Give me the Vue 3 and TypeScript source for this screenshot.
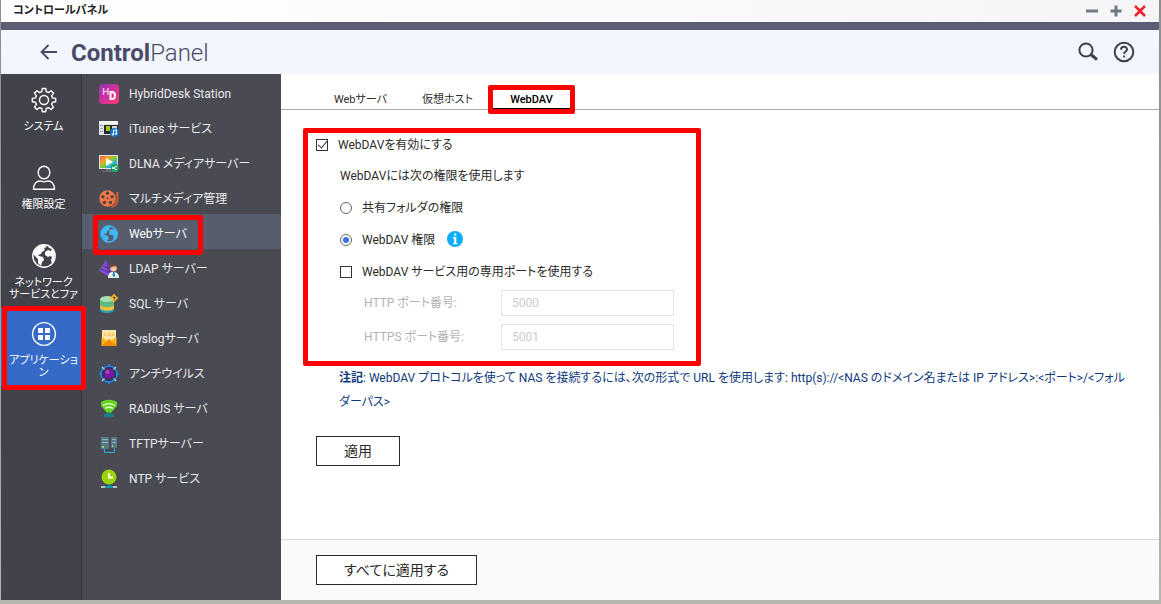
<script setup lang="ts">
import { ref } from 'vue'

interface Category {
  id: string
  lines: string[]
}
interface Service {
  id: string
  label: string
}

const categories: Category[] = [
  { id: 'system', lines: ['システム'] },
  { id: 'privilege', lines: ['権限設定'] },
  { id: 'network', lines: ['ネットワーク', 'サービスとファ'] },
  { id: 'apps', lines: ['アプリケーショ', 'ン'] },
]

const services: Service[] = [
  { id: 'hybrid', label: 'HybridDesk Station' },
  { id: 'itunes', label: 'iTunes サービス' },
  { id: 'dlna', label: 'DLNA メディアサーバー' },
  { id: 'multimedia', label: 'マルチメディア管理' },
  { id: 'web', label: 'Webサーバ' },
  { id: 'ldap', label: 'LDAP サーバー' },
  { id: 'sql', label: 'SQL サーバ' },
  { id: 'syslog', label: 'Syslogサーバ' },
  { id: 'antivirus', label: 'アンチウイルス' },
  { id: 'radius', label: 'RADIUS サーバ' },
  { id: 'tftp', label: 'TFTPサーバー' },
  { id: 'ntp', label: 'NTP サービス' },
]

const tabs = ['Webサーバ', '仮想ホスト', 'WebDAV']

const category = ref('apps')
const service = ref('web')
const tab = ref('WebDAV')
const enabled = ref(true)
const permission = ref('webdav')
const dedicatedPort = ref(false)
const httpPort = ref('5000')
const httpsPort = ref('5001')
</script>

<template>
  <div class="desktop">
    <div class="window">
      <header class="titlebar">
        <span class="title">コントロールパネル</span>
        <div class="controls">
          <button type="button" aria-label="最小化">
            <svg width="12" height="12" viewBox="0 0 12 12"><path d="M0 6h12" stroke="#6f7a82" stroke-width="3" /></svg>
          </button>
          <button type="button" aria-label="最大化">
            <svg width="12" height="12" viewBox="0 0 12 12"><path d="M0.500 6h11M6 .5v11" stroke="#6f7a82" stroke-width="3" /></svg>
          </button>
          <button type="button" aria-label="閉じる">
            <svg width="12" height="12" viewBox="0 0 12 12"><path d="M1 1l10 10M11 1L1 11" stroke="#ee2227" stroke-width="2.500" /></svg>
          </button>
        </div>
      </header>

      <div class="brandbar">
        <button type="button" class="back" aria-label="戻る">
          <svg width="18" height="18" viewBox="0 0 18 18" fill="none" stroke="#4b4a66" stroke-width="1.800"><path d="M17 9H2M8.500 2L1.500 9l7 7" /></svg>
        </button>
        <h1><b>Control</b>Panel</h1>
        <div class="tools">
          <button type="button" aria-label="検索">
            <svg width="20" height="20" viewBox="0 0 20 20" fill="none" stroke="#3f3f4a"><circle cx="8" cy="8" r="6.600" stroke-width="2" /><path d="M12.500 12.500l1.500 1" stroke-width="2" /><path d="M13.500 13l5.500 4.600" stroke-width="3" /></svg>
          </button>
          <button type="button" aria-label="ヘルプ">
            <svg width="22" height="22" viewBox="0 0 22 22" fill="none" stroke="#3f3f4a" stroke-width="2"><circle cx="11" cy="11" r="9.300" /><path d="M8 8.800c0-4 6-3.800 6-.4 0 2.200-2.900 2.200-2.900 4.600M11.100 14.600v2" /></svg>
          </button>
        </div>
      </div>

      <div class="body">
        <nav class="categories" aria-label="カテゴリ">
          <button
            v-for="c in categories"
            :key="c.id"
            type="button"
            class="category"
            :class="{ active: category === c.id }"
            @click="category = c.id"
          >
            <svg width="26" height="26" viewBox="0 0 26 26" fill="none" stroke="#fff" stroke-width="1.400">
              <template v-if="c.id === 'system'">
                <circle cx="13" cy="13" r="4.500" />
                <path stroke-linejoin="round" d="M11.300 1.500h3.400l.6 3.200 2.100.9 2.700-1.900 2.400 2.400-1.900 2.700.9 2.100 3.200.6v3.300l-3.200.5-.9 2.100 1.900 2.700-2.400 2.400-2.700-1.800-2.100.8-.6 3.200h-3.400l-.5-3.200-2.200-.8-2.700 1.800-2.400-2.400 1.900-2.700-.9-2.100-3.200-.5v-3.300l3.200-.6.9-2.100-1.900-2.700 2.400-2.400 2.700 1.900 2.200-.9z" />
              </template>
              <template v-else-if="c.id === 'privilege'">
                <ellipse cx="13" cy="7.500" rx="5.800" ry="6.300" />
                <path d="M2.500 24.300c0-5.300 3-8.300 6.500-8.300 2 0 2 .8 4 .8s2-.8 4-.8c3.500 0 6.500 3 6.500 8.300z" stroke-linejoin="round" />
              </template>
              <template v-else-if="c.id === 'network'">
                <circle cx="13" cy="13" r="11.200" />
                <path fill="#fff" stroke="none" d="M3 8l5-5 5-1 3 2-3 1 1 2-3 2-1 2-3 1 1 1 4 1 1 3-2 2-1 4-3-3 0-4-4-4zM17 3l4 2 3 5-1 7-2 4-1-4 1-3-2-1-2 1-3-2 0-3 3-2 3 1 1-2-3-1z" />
              </template>
              <template v-else>
                <circle cx="13" cy="13" r="11.400" />
                <path fill="#fff" stroke="none" d="M7 7h5v5H7zM14 7h5v5h-5zM7 14h5v5H7zM14 14h5v5h-5z" />
              </template>
            </svg>
            <span class="caption"><span v-for="l in c.lines" :key="l">{{ l }}</span></span>
          </button>
        </nav>

        <nav class="services" aria-label="アプリケーション">
          <button
            v-for="s in services"
            :key="s.id"
            type="button"
            class="service"
            :class="{ active: service === s.id }"
            @click="service = s.id"
          >
            <svg width="20" height="20" viewBox="0 0 20 20">
              <template v-if="s.id === 'hybrid'">
                <defs><linearGradient id="hd" x1="0" y1="0" x2="1" y2="1"><stop offset="0" stop-color="#8c36b9" /><stop offset=".5" stop-color="#d32f9d" /><stop offset="1" stop-color="#ff3b67" /></linearGradient></defs>
                <rect width="20" height="20" rx="4" fill="url(#hd)" />
                <path d="M4.500 4v7M9 4v7M4.500 7.500H9" stroke="#f2b7de" stroke-width="1.500" fill="none" />
                <path d="M11.500 8v7h1.500c4 0 4-7 0-7z" stroke="#fff" stroke-width="2" fill="none" />
              </template>
              <template v-else-if="s.id === 'itunes'">
                <path fill="#dfe3e5" d="M0 2h19v14H0z" /><path fill="#f5f5f5" d="M0 2h19v3H0z" />
                <path fill="#272b2d" d="M5 6h14v9H5z" /><path fill="#a8c820" d="M7 7h4v5H7z" /><path fill="#d8d8d8" d="M13 7h5v5h-5z" />
                <path stroke="#9da6ac" d="M1 6.500h3M1 9.500h3M1 12.500h3" />
                <circle cx="15.500" cy="13.500" r="4.500" fill="#1778d2" /><path d="M14.500 15.500v-4l3-.7v4" stroke="#fff" fill="none" /><circle cx="14" cy="15.500" r="1" fill="#fff" /><circle cx="17" cy="14.800" r="1" fill="#fff" />
              </template>
              <template v-else-if="s.id === 'dlna'">
                <defs><linearGradient id="tv" x1="0" y1="0" x2="1" y2="1"><stop offset="0" stop-color="#f55c58" /><stop offset=".28" stop-color="#ff9d25" /><stop offset=".52" stop-color="#7bd233" /><stop offset=".75" stop-color="#25a7f3" /><stop offset="1" stop-color="#884de2" /></linearGradient></defs>
                <path fill="#dce1e5" d="M0 1h19v14H0z" /><path fill="url(#tv)" d="M1 2h17v12H1z" /><path fill="#fff" d="M7 4l7 4-7 4z" /><path fill="#68747b" d="M7 15h5v2h3v1H4v-1h3z" />
                <circle cx="16" cy="14" r="4" fill="#14a85d" /><path d="M18 12l-4 2 4 2" stroke="#fff" fill="none" /><circle cx="14" cy="14" r="1" fill="#fff" />
              </template>
              <template v-else-if="s.id === 'multimedia'">
                <path fill="#c95730" d="M17 3h2.500v8c0 4-2 6-6.500 8l-2-1c4-2 6-4 6-7z" /><circle cx="8.500" cy="9.500" r="8.500" fill="#f47946" stroke="#4a4a53" stroke-width=".6" />
                <g fill="#514349"><circle cx="8.500" cy="4.300" r="1.700" /><circle cx="3.900" cy="7.800" r="1.700" /><circle cx="13.100" cy="7.800" r="1.700" /><circle cx="5.500" cy="13.500" r="1.700" /><circle cx="11.500" cy="13.500" r="1.700" /><circle cx="8.500" cy="9.500" r="1" /></g>
              </template>
              <template v-else-if="s.id === 'web'">
                <circle cx="10" cy="10" r="8" fill="none" stroke="#3dbafa" stroke-width="1.300" />
                <path fill="#3dbafa" d="M2 7l4-5 5-1 1 2-2 1 1 2-3 1 0 2-3 1 1 1 3 1 1 3-2 1 0 3-3-2-1-4-2-2zM13 2l4 3 2 4-1 5-3 3-1-3 1-2-2-1-2 0-1-2 1-3 3-1 1 1 1-1-2-1z" />
              </template>
              <template v-else-if="s.id === 'ldap'">
                <path fill="#6c3ab7" d="M7 1l7 12-5 4-9-5z" /><path fill="#8150c8" d="M7 1L0 12l9 5z" /><path stroke="#4a317e" d="M4 7l5 2 3-1M2 10l7 3 4-2" fill="none" />
                <path d="M9 19c0-5 2-6 5-6s6 1 6 6z" fill="#e8edef" /><circle cx="14.500" cy="9" r="3.400" fill="#f6c6a2" /><path fill="#774531" d="M11 9c0-6 7-6 7 0l-2-2-3 1z" /><path fill="#2085bd" d="M14 13h1.500l.5 4-1 1-1.500-1z" />
              </template>
              <template v-else-if="s.id === 'sql'">
                <path fill="#2b9cb4" d="M1 13v3c0 4 14 4 14 0v-3z" /><path fill="#ffc235" d="M1 10v4c2 4 14 3 14 0v-4z" /><path fill="#62ba83" d="M1 5v6c1 3 13 3 14 0V5z" /><ellipse cx="8" cy="5" rx="7" ry="3" fill="#a5e0b4" />
                <circle cx="15" cy="4" r="2.200" fill="none" stroke="#ffb711" stroke-width="1.500" /><path d="M15 0v2M11 4h2M17 4h2M15 6v2" stroke="#ffb711" stroke-width="1.600" />
              </template>
              <template v-else-if="s.id === 'syslog'">
                <path fill="#ffe4a8" d="M3 1h14v13H3z" /><path fill="#ffb515" d="M2.500 8l7.500 5 7.500-5v9h-15z" /><path fill="#f58a00" d="M2.500 17l7.500-7 7.500 7z" /><path d="M5.500 4v2.500h2M9 4.500h2v2H9zM15 4.500h-2v2h2V5.500" stroke="#ffb850" stroke-width=".8" fill="none" />
              </template>
              <template v-else-if="s.id === 'antivirus'">
                <circle cx="10" cy="10" r="8" fill="#353653" stroke="#2588ec" stroke-width="1.500" /><path stroke="#9dd4ff" stroke-width="1.300" d="M3 3l2.500 2.500M14.500 14.500L17 17M17 3l-2.500 2.500M3 17l2.500-2.500" /><path stroke="#2588ec" stroke-width="1.500" d="M10 0v3M10 17v3M0 10h3M17 10h3" /><circle cx="10" cy="10" r="5" fill="#7b16a4" /><circle cx="8.500" cy="8" r="2" fill="#ae49cc" />
              </template>
              <template v-else-if="s.id === 'radius'">
                <path fill="#62d321" d="M2 3c5-3 11-3 16 0v4l-8 9-8-9z" /><path d="M4 6.500c4-2.500 8-2.500 12 0M6 9.500c3-2 5-2 8 0" fill="none" stroke="#eaffd7" stroke-width="1.400" /><path fill="#167f87" d="M9 13h2v2h4v3H5v-3h4z" />
              </template>
              <template v-else-if="s.id === 'tftp'">
                <path fill="#587889" d="M2 3h8v12H2zM12 3h6v11h-6z" /><path stroke="#92acba" d="M3 5.500h6M3 8.500h6M13 5.500h4M13 8.500h4" /><path fill="#8be041" d="M3 12h2v2H3zM13 11h1v2h-1z" /><path stroke="#24aee5" d="M5.500 15v3.500h10V14" fill="none" />
              </template>
              <template v-else>
                <circle cx="10" cy="8" r="7.500" fill="#9bd300" /><path d="M10 4v4.500h4" stroke="#fff" stroke-width="1.800" fill="none" /><path fill="#b8bec2" d="M2 17h16v2H2z" /><path fill="#0797a5" d="M9 15h2v2h3v2H6v-2h3z" />
              </template>
            </svg>
            <span>{{ s.label }}</span>
          </button>
        </nav>

        <main class="content">
          <div class="tabs" role="tablist">
            <button
              v-for="t in tabs"
              :key="t"
              type="button"
              role="tab"
              class="tab"
              :class="{ active: tab === t }"
              :aria-selected="tab === t"
              @click="tab = t"
            >{{ t }}</button>
          </div>

          <section class="pane">
            <div class="settings">
              <label class="row"><input v-model="enabled" type="checkbox" />WebDAVを有効にする</label>
              <div class="nested" role="group" aria-labelledby="permission-title">
                <p id="permission-title" class="row">WebDAVには次の権限を使用します</p>
                <label class="row"><input v-model="permission" type="radio" value="share" name="permission" />共有フォルダの権限</label>
                <div class="row">
                  <label class="row"><input v-model="permission" type="radio" value="webdav" name="permission" />WebDAV 権限</label>
                  <button type="button" class="info" aria-label="情報">
                    <svg width="16" height="16" viewBox="0 0 16 16"><circle cx="8" cy="8" r="8" fill="#0aaeff" /><path d="M7 2.500h2.300v2H7zM6 6h3.300v6h1v1.300H6V12h1V7.300H6z" fill="#fff" /></svg>
                  </button>
                </div>
                <label class="row"><input v-model="dedicatedPort" type="checkbox" />WebDAV サービス用の専用ポートを使用する</label>
                <div class="ports">
                  <label for="http-port">HTTP ポート番号:</label>
                  <input id="http-port" v-model="httpPort" type="text" :disabled="!dedicatedPort" />
                  <label for="https-port">HTTPS ポート番号:</label>
                  <input id="https-port" v-model="httpsPort" type="text" :disabled="!dedicatedPort" />
                </div>
              </div>
            </div>
            <p class="note"><b>注記</b>: WebDAV プロトコルを使って NAS を接続するには、次の形式で URL を使用します: http(s)://&lt;NAS のドメイン名または IP アドレス&gt;:&lt;ポート&gt;/&lt;フォルダーパス&gt;</p>
            <button type="button" class="action apply">適用</button>
          </section>

          <footer class="footer">
            <button type="button" class="action">すべてに適用する</button>
          </footer>
        </main>
      </div>
    </div>
  </div>
</template>

<style>
body {
  margin: 0;
}
</style>

<style scoped>
* {
  box-sizing: border-box;
}
.desktop {
  min-height: 100vh;
  display: flex;
  padding: 0 2px 4px 1px;
  background: linear-gradient(#8c8f90, #a5a69c 75%, #b5b6ae);
  font-family: Roboto, "Noto Sans CJK JP", sans-serif;
  font-feature-settings: "palt";
  font-size: 12px;
  line-height: 16px;
  color: #2b2b2b;
}
.window {
  flex: 1;
  display: flex;
  flex-direction: column;
  background: #fff;
}
button {
  font: inherit;
  font-feature-settings: inherit;
  color: inherit;
  border: 0;
  padding: 0;
  background: none;
  cursor: pointer;
}
svg {
  display: block;
  flex: none;
}
p {
  margin: 0;
}
.titlebar {
  display: flex;
  align-items: center;
  justify-content: space-between;
  height: 22px;
  padding: 0 13px 0 12px;
  background: linear-gradient(90deg, #fff, #f5f5f7);
}
.title {
  font-size: 11px;
  font-weight: 700;
  color: #222;
}
.controls {
  display: flex;
  gap: 12px;
}
.brandbar {
  display: flex;
  align-items: center;
  height: 52px;
  padding: 0 24px 0 39px;
  border-top: 8px solid #5c5c74;
  background: #f2f6ff;
}
h1 {
  margin: 0 0 0 13px;
  padding-top: 2px;
  font-size: 24px;
  font-weight: 300;
  line-height: 42px;
  color: #4b4a66;
}
h1 b {
  font-weight: 700;
}
.tools {
  display: flex;
  align-items: center;
  gap: 15px;
  margin-left: auto;
}
.body {
  flex: 1;
  display: flex;
}
.categories {
  flex: 0 0 81px;
  border-right: 1px solid #36363c;
  background: #42424b;
}
.category {
  position: relative;
  display: flex;
  flex-direction: column;
  align-items: center;
  width: 100%;
  height: 78px;
  padding: 13px 0 0 5px;
  gap: 8px;
  color: #fff;
}
.category.active {
  background: #356ac9;
}
.caption {
  display: flex;
  flex-direction: column;
  align-items: center;
  font-size: 11px;
  line-height: 12px;
  white-space: nowrap;
}
.category.active::after,
.service.active::after,
.tab.active::after {
  content: "";
  position: absolute;
  border: 5px solid #f00;
  border-radius: 2px;
  pointer-events: none;
}
.category.active::after {
  inset: -2px -5px -4px 1px;
  z-index: 1;
}
.services {
  flex: 0 0 199px;
  background: #4a4a53;
}
.service {
  position: relative;
  display: flex;
  align-items: center;
  gap: 10px;
  width: 100%;
  height: 35px;
  padding: 4px 0 0 17px;
  color: #e9e9ec;
  white-space: nowrap;
}
.service.active {
  background: #565e6e;
  color: #fff;
}
.service.active::after {
  inset: 1px 78px -6px 11px;
}
.content {
  flex: 1;
  min-width: 0;
  display: flex;
  flex-direction: column;
}
.tabs {
  display: flex;
  align-items: flex-end;
  gap: 14px;
  height: 36px;
  padding-left: 41px;
  border-bottom: 1px solid #aaa;
}
.tab {
  position: relative;
  width: 77px;
  height: 20px;
  padding-top: 2px;
  font-size: 11px;
  line-height: 18px;
  white-space: nowrap;
}
.tab:nth-child(2) {
  width: 69px;
}
.tab.active {
  margin-left: -3px;
  border-bottom: 1px solid #000;
  font-weight: 500;
  color: #000;
}
.tab.active::after {
  inset: -4px -5px -6px;
}
.pane {
  flex: 1;
  padding: 18px 34px 24px 22px;
}
.settings {
  width: 398px;
  max-width: 100%;
  padding: 0 22px 11px 8px;
  border: 5px solid #f00;
  border-radius: 2px;
}
.row {
  display: flex;
  align-items: center;
  height: 32px;
}
.settings > .row {
  height: 24px;
}
.settings > .row input {
  margin-right: 10px;
}
.nested {
  padding: 3px 0 0 24px;
}
input[type="checkbox"],
input[type="radio"] {
  appearance: none;
  flex: none;
  display: grid;
  place-items: center;
  width: 12px;
  height: 12px;
  margin: 0 10px 0 0;
  border: 1px solid #333;
  background: #fff;
}
input[type="radio"] {
  border-color: #666;
  border-radius: 50%;
}
input[type="radio"]:checked::after {
  content: "";
  width: 6px;
  height: 6px;
  border-radius: 50%;
  background: #3970dd;
}
input[type="checkbox"]:checked::after {
  content: "";
  width: 8px;
  height: 4px;
  margin-bottom: 3px;
  border: solid #333;
  border-width: 0 0 1px 1px;
  transform: rotate(-50deg);
}
.info {
  margin: 0 0 3px 12px;
}
.ports {
  display: grid;
  grid-template-columns: 137px 173px;
  gap: 8px 0;
  align-items: center;
  padding: 2px 0 0 24px;
  color: #b2b2b2;
}
input[type="text"] {
  width: 100%;
  height: 26px;
  padding: 0 10px;
  border: 1px solid #e3e3e3;
  background: #fff;
  font: inherit;
  color: #ccc;
}
.note {
  padding-left: 36px;
  line-height: 24px;
  color: #10397c;
}
.action {
  height: 30px;
  padding: 0 27px;
  border: 1px solid #2b2b2b;
  background: #fff;
  font-size: 14px;
  line-height: 28px;
}
.apply {
  margin: 22px 0 0 13px;
}
.footer {
  padding: 15px 35px;
  border-top: 1px solid #d8d8d8;
  background: #fafafa;
}
</style>
